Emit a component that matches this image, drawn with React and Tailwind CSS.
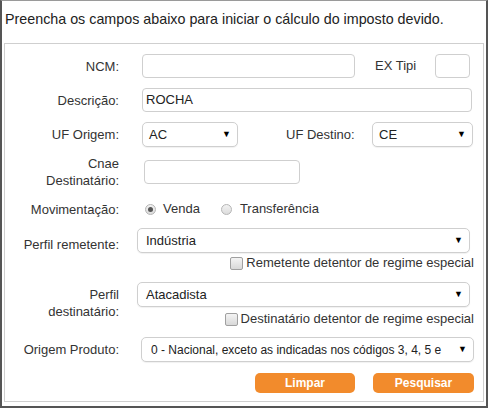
import React from 'react';

const font = { fontFamily: '"Liberation Sans", Arial, sans-serif' };

function Label({ children, className = '' }) {
  return (
    <div className={`w-[114px] shrink-0 text-right text-[13px] leading-[17px] text-[#333] ${className}`}>
      {children}
    </div>
  );
}

function Input({ className = '', value = '' }) {
  return (
    <div className={`flex items-center rounded-[4px] border border-[#cfcfcf] bg-white px-[3px] text-[13px] text-[#222] ${className}`}>
      {value}
    </div>
  );
}

function Select({ className = '', textClass = '', value }) {
  return (
    <div className={`flex items-center justify-between rounded-[5px] border border-[#cfcfcf] bg-white pl-[6px] pr-[6px] text-[13px] text-[#222] shadow-[0_1px_1px_rgba(0,0,0,0.06)] ${className}`}>
      <span className={`whitespace-nowrap ${textClass}`}>{value}</span>
      <span className="shrink-0 text-[9px] leading-none text-black">▼</span>
    </div>
  );
}

function Radio({ checked }) {
  return (
    <span className="flex h-[11px] w-[11px] items-center justify-center rounded-full border border-[#b5b5b5] bg-gradient-to-b from-[#f2f2f2] to-[#dcdcdc]">
      {checked && <span className="h-[5px] w-[5px] rounded-full bg-[#555]" />}
    </span>
  );
}

function Checkbox() {
  return (
    <span className="inline-block h-[13px] w-[13px] rounded-[2px] border border-[#a0a0a0] bg-gradient-to-b from-[#f4f4f4] to-[#d8d8d8]" />
  );
}

export default function App() {
  return (
    <div style={font} className="h-[408px] w-[488px] border-x-2 border-b-2 border-t border-x-[#555] border-b-[#555] border-t-[#9a9a9a] bg-white">
      <div className="flex h-[42px] items-center whitespace-nowrap pb-[4px] pl-[3px] text-[14.3px] text-[#222]">
        Preencha os campos abaixo para iniciar o cálculo do imposto devido.
      </div>

      <div className="mx-[2px] h-[359px] border border-[#cfcfcf] pt-[10px]">
        {/* NCM / EX Tipi */}
        <div className="flex h-[24px] items-center">
          <Label>NCM:</Label>
          <Input className="ml-[23px] h-[24px] w-[213px]" />
          <span className="ml-[20px] whitespace-nowrap text-[13px] text-[#333]">EX Tipi</span>
          <Input className="ml-[19px] h-[24px] w-[35px]" />
        </div>

        {/* Descrição */}
        <div className="mt-[10px] flex h-[24px] items-center">
          <Label>Descrição:</Label>
          <Input className="ml-[23px] h-[24px] w-[330px]" value="ROCHA" />
        </div>

        {/* UF */}
        <div className="mt-[10px] flex h-[25px] items-center">
          <Label>UF Origem:</Label>
          <Select className="ml-[23px] h-[25px] w-[96px]" value="AC" />
          <span className="ml-[48px] w-[68px] whitespace-nowrap text-[13px] text-[#333]">UF Destino:</span>
          <Select className="ml-[18px] h-[25px] w-[101px]" value="CE" />
        </div>

        {/* Cnae */}
        <div className="mt-[8px] flex h-[34px] items-center">
          <Label>
            Cnae
            <br />
            Destinatário:
          </Label>
          <Input className="ml-[25px] h-[24px] w-[156px]" />
        </div>

        {/* Movimentação */}
        <div className="mt-[10px] flex h-[20px] items-center text-[13px] text-[#333]">
          <Label>Movimentação:</Label>
          <span className="ml-[26px]">
            <Radio checked />
          </span>
          <span className="ml-[7px]">Venda</span>
          <span className="ml-[21px]">
            <Radio />
          </span>
          <span className="ml-[8px]">Transferência</span>
        </div>

        {/* Perfil remetente */}
        <div className="mt-[9px] flex h-[25px] items-start">
          <Label className="mt-[8px]">Perfil remetente:</Label>
          <Select className="ml-[18px] h-[25px] w-[333px]" textClass="pl-[2px]" value="Indústria" />
        </div>
        <div className="mt-[3px] flex h-[14px] items-center justify-end gap-[3px] pr-[9px] text-[13px] text-[#333]">
          <Checkbox />
          <span>Remetente detentor de regime especial</span>
        </div>

        {/* Perfil destinatário */}
        <div className="mt-[12px] flex h-[25px] items-start">
          <Label className="mt-[4px]">
            Perfil
            <br />
            destinatário:
          </Label>
          <Select className="ml-[18px] h-[25px] w-[333px]" textClass="pl-[2px]" value="Atacadista" />
        </div>
        <div className="mt-[5px] flex h-[14px] items-center justify-end gap-[3px] pr-[9px] text-[13px] text-[#333]">
          <Checkbox />
          <span>Destinatário detentor de regime especial</span>
        </div>

        {/* Origem Produto */}
        <div className="mt-[11px] flex h-[25px] items-center">
          <Label>Origem Produto:</Label>
          <Select
            className="ml-[22px] h-[25px] w-[333px]"
            textClass="pl-[3px] text-[12px]"
            value="0 - Nacional, exceto as indicadas nos códigos 3, 4, 5 e"
          />
        </div>

        {/* Buttons */}
        <div className="mt-[11px] flex h-[20px] justify-end gap-[18px] pr-[9px]">
          <button className="h-[20px] w-[100px] rounded-[5px] bg-[#f28b2c] text-[12px] font-bold text-white">
            Limpar
          </button>
          <button className="h-[20px] w-[101px] rounded-[5px] bg-[#f28b2c] text-[12px] font-bold text-white">
            Pesquisar
          </button>
        </div>
      </div>
    </div>
  );
}
